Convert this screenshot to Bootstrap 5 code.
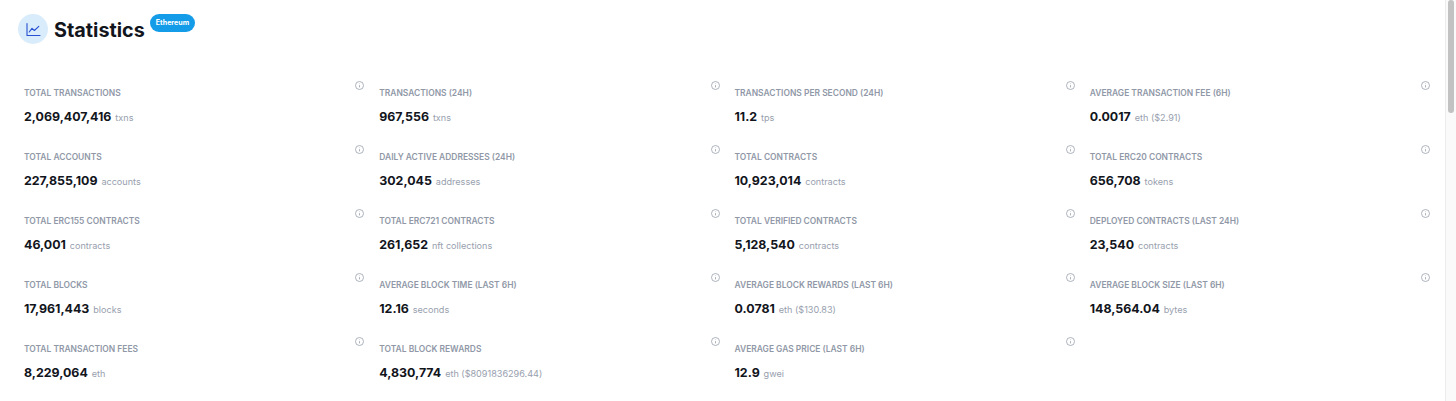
<!DOCTYPE html>
<html lang="en">
<head>
  <meta charset="UTF-8" />
  <title>Statistics</title>
  <link href="https://cdn.jsdelivr.net/npm/bootstrap@5.3.3/dist/css/bootstrap.min.css" rel="stylesheet"/>
  <style>
    html, body { height: 100%; overflow: hidden; }
    body { font-family: Inter, "Liberation Sans", sans-serif; background: #fff; }

    /* Fake page scrollbar */
    .page-scroll { width: 11px; border-left: 1px solid #ececec; background: #fafafa; padding: 0 2px; }
    .page-thumb { width: 6px; height: 113px; background: #c2c2c2; border-radius: 3px; }

    /* Header */
    .stats-main { padding: 14px 15px 0 24px; }
    .stats-head { margin-left: -6px; height: 67px; }
    .stats-circle { width: 30px; height: 30px; background: #d9ecfb; }
    .stats-title { font-size: 19.8px; font-weight: 700; color: #12151c; margin: 0 0 0 6px; line-height: 33px; }
    .stats-chain { font-size: 7.1px; font-weight: 700; line-height: 18px; height: 18px; padding: 0 6px; margin-left: 5px; background: #159ce8; color: #fff; }

    /* Cells */
    .stats-grid { --bs-gutter-x: 15px; --bs-gutter-y: 0; }
    .stat-cell { height: 64px; }
    .stat-label { font-size: 8.45px; font-weight: 600; color: #9098a7; line-height: 12px; margin-top: 6px; text-transform: uppercase; }
    .stat-value { font-size: 12.4px; font-weight: 700; color: #12151c; line-height: 18px; margin-top: 8.5px; }
    .stat-unit { font-size: 9.1px; font-weight: 400; color: #98a0ae; margin-left: 1px; }
    .stat-info { width: 9px; height: 9px; flex: none; }
  </style>
</head>
<body class="d-flex">
  <main class="stats-main flex-grow-1">
    <div class="stats-head d-flex align-items-start">
      <div class="stats-circle rounded-circle d-flex align-items-center justify-content-center">
        <svg width="15" height="15" viewBox="0 0 15 15" fill="none" stroke="#2750d2" stroke-width="1.1" stroke-linecap="round" stroke-linejoin="round">
          <path d="M1 1.5V13.5H14"/>
          <path d="M3.2 10L6 6.3L8.4 8.5L12.8 4.4"/>
        </svg>
      </div>
      <h1 class="stats-title">Statistics</h1>
      <span class="stats-chain rounded-pill">Ethereum</span>
    </div>
    <div class="row stats-grid" id="statsGrid"></div>
  </main>
  <aside class="page-scroll flex-shrink-0"><div class="page-thumb"></div></aside>

  <script src="https://cdn.jsdelivr.net/npm/bootstrap@5.3.3/dist/js/bootstrap.bundle.min.js"></script>
  <script>
    const stats = [
      ['Total Transactions', '2,069,407,416', 'txns'],
      ['Transactions (24H)', '967,556', 'txns'],
      ['Transactions per second (24H)', '11.2', 'tps'],
      ['Average transaction fee (6H)', '0.0017', 'eth ($2.91)'],
      ['Total Accounts', '227,855,109', 'accounts'],
      ['Daily active addresses (24H)', '302,045', 'addresses'],
      ['Total Contracts', '10,923,014', 'contracts'],
      ['Total ERC20 Contracts', '656,708', 'tokens'],
      ['Total ERC155 Contracts', '46,001', 'contracts'],
      ['Total ERC721 Contracts', '261,652', 'nft collections'],
      ['Total Verified Contracts', '5,128,540', 'contracts'],
      ['Deployed Contracts (Last 24H)', '23,540', 'contracts'],
      ['Total Blocks', '17,961,443', 'blocks'],
      ['Average block time (Last 6H)', '12.16', 'seconds'],
      ['Average block rewards (Last 6H)', '0.0781', 'eth ($130.83)'],
      ['Average block size (Last 6H)', '148,564.04', 'bytes'],
      ['Total Transaction Fees', '8,229,064', 'eth'],
      ['Total Block Rewards', '4,830,774', 'eth ($8091836296.44)'],
      ['Average gas price (Last 6H)', '12.9', 'gwei']
    ];

    const infoIcon = `<svg class="stat-info" viewBox="0 0 9 9" fill="none" stroke="#a3a9b4" stroke-width="0.9">
      <circle cx="4.5" cy="4.5" r="4"/><path d="M4.5 4.2V6.4M4.5 2.6V3.1"/></svg>`;

    const grid = document.getElementById('statsGrid');
    stats.forEach(([label, value, unit]) => {
      const col = document.createElement('div');
      col.className = 'col-3';
      col.innerHTML = `
        <div class="stat-cell d-flex justify-content-between align-items-start">
          <div>
            <div class="stat-label">${label}</div>
            <div class="stat-value">${value} <span class="stat-unit">${unit}</span></div>
          </div>
          ${infoIcon}
        </div>`;
      grid.appendChild(col);
    });
  </script>
</body>
</html>
